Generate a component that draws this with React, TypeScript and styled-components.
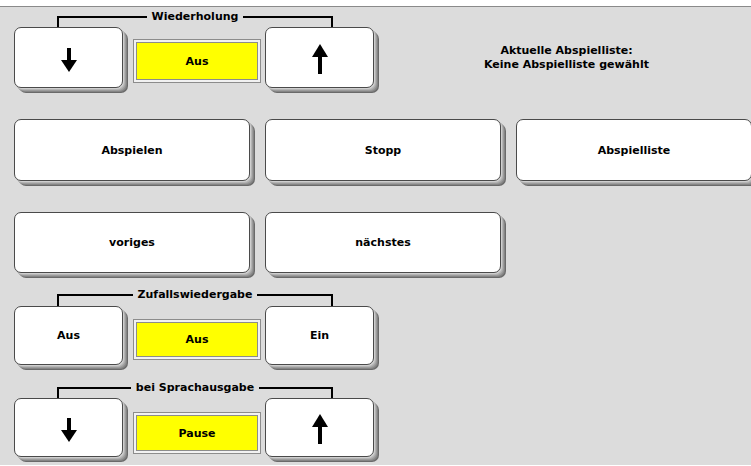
import React from 'react';
import styled, {createGlobalStyle} from 'styled-components';

const GlobalStyle = createGlobalStyle`
    html, body {
        margin: 0;
        padding: 0;
        background: #ffffff;
    }
    body {
        font-family: "DejaVu Sans", "Liberation Sans", sans-serif;
        font-size: 11px;
        font-weight: bold;
        color: #000;
    }
`;

const Screen = styled.div`
    margin-top: 6px;
    width: 751px;
    height: 459px;
    box-sizing: border-box;
    border-top: 1px solid #8a8a8a;
    background: #dcdcdc;
    padding-left: 14px;
    overflow: hidden;
    display: flex;
    flex-direction: column;
`;

const TopRow = styled.div`
    display: flex;
    padding-top: 9px;
`;

const Group = styled.div<{$top?: number}>`
    width: 360px;
    flex-shrink: 0;
    display: flex;
    flex-direction: column;
    margin-top: ${(p) => p.$top ?? 0}px;
`;

const Bracket = styled.div<{$h: number}>`
    display: flex;
    margin: 0 41px 0 43px;
    height: ${(p) => p.$h}px;
`;

const BracketSide = styled.div<{$side: 'left' | 'right'}>`
    flex: 1;
    border-top: 2px solid #000;
    ${(p) => p.$side === 'left' ? 'border-left: 2px solid #000;' : 'border-right: 2px solid #000;'}
`;

const BracketLabel = styled.span`
    padding: 0 5px;
    margin-top: -6px;
    line-height: 13px;
    height: 13px;
    white-space: nowrap;
`;

const SmallRow = styled.div<{$h: number}>`
    display: flex;
    align-items: flex-start;
    height: ${(p) => p.$h}px;
`;

const Key = styled.div<{$w: number; $h?: number}>`
    box-sizing: border-box;
    flex-shrink: 0;
    width: ${(p) => p.$w}px;
    height: ${(p) => (p.$h ? p.$h + 'px' : '100%')};
    background: #ffffff;
    border: 1px solid #4a4a4a;
    border-radius: 7px;
    box-shadow:
        1px 1px 0 #cfcfcf,
        2px 2px 0 #b4b4b4,
        3px 3px 0 #9c9c9c,
        4px 4px 0 #858585,
        5px 5px 0 #6a6a6a;
    display: flex;
    align-items: center;
    justify-content: center;
    white-space: nowrap;
`;

const DisplayFrame = styled.div<{$top: number; $h: number}>`
    box-sizing: border-box;
    flex-shrink: 0;
    width: 128px;
    margin: ${(p) => p.$top}px 4px 0 10px;
    height: ${(p) => p.$h}px;
    border: 1px solid #8c8c8c;
    background: #f2f2f2;
    padding: 2px;
    display: flex;
`;

const DisplayFace = styled.div`
    flex: 1;
    box-sizing: border-box;
    border: 1px solid #8c8c8c;
    background: #ffff00;
    display: flex;
    align-items: center;
    justify-content: center;
`;

const Info = styled.div`
    flex: 1;
    height: 61px;
    margin-top: 11px;
    padding-left: 8px;
    display: flex;
    flex-direction: column;
    align-items: center;
    justify-content: center;
    text-align: center;
    line-height: 14px;
`;

const BigRow = styled.div<{$top: number}>`
    display: flex;
    gap: 15px;
    margin-top: ${(p) => p.$top}px;
    height: 62px;
    flex-shrink: 0;
`;

const ArrowSvg = styled.svg<{$shift: number}>`
    display: block;
    margin-top: ${(p) => p.$shift}px;
`;

const ArrowDown = () => (
    <ArrowSvg $shift={4} width="16" height="24" viewBox="0 0 16 24">
        <rect x="6" y="0" width="4" height="14" fill="#000" />
        <polygon points="0,12 16,12 8,24" fill="#000" />
    </ArrowSvg>
);

const ArrowUp = () => (
    <ArrowSvg $shift={2} width="16" height="30" viewBox="0 0 16 30">
        <polygon points="8,0 16,13 0,13" fill="#000" />
        <rect x="6" y="11" width="4" height="19" fill="#000" />
    </ArrowSvg>
);

interface TripleProps {
    label: string;
    left: React.ReactNode;
    right: React.ReactNode;
    value: string;
    bracketH: number;
    rowH: number;
    dispTop: number;
    dispH: number;
    top?: number;
}

const Triple = ({label, left, right, value, bracketH, rowH, dispTop, dispH, top}: TripleProps) => (
    <Group $top={top}>
        <Bracket $h={bracketH}>
            <BracketSide $side="left" />
            <BracketLabel>{label}</BracketLabel>
            <BracketSide $side="right" />
        </Bracket>
        <SmallRow $h={rowH}>
            <Key $w={109}>{left}</Key>
            <DisplayFrame $top={dispTop} $h={dispH}>
                <DisplayFace>{value}</DisplayFace>
            </DisplayFrame>
            <Key $w={109}>{right}</Key>
        </SmallRow>
    </Group>
);

export default function App() {
    return (
        <>
            <GlobalStyle />
            <Screen>
                <TopRow>
                    <Triple label="Wiederholung" left={<ArrowDown />} right={<ArrowUp />} value="Aus"
                        bracketH={11} rowH={61} dispTop={12} dispH={44} />
                    <Info>
                        <span>Aktuelle Abspielliste:</span>
                        <span>Keine Abspielliste gewählt</span>
                    </Info>
                </TopRow>
                <BigRow $top={31}>
                    <Key $w={236}>Abspielen</Key>
                    <Key $w={236}>Stopp</Key>
                    <Key $w={236}>Abspielliste</Key>
                </BigRow>
                <BigRow $top={31}>
                    <Key $w={236} $h={61}>voriges</Key>
                    <Key $w={236} $h={61}>nächstes</Key>
                </BigRow>
                <Triple label="Zufallswiedergabe" left="Aus" right="Ein" value="Aus" top={20}
                    bracketH={12} rowH={59} dispTop={13} dispH={41} />
                <Triple label="bei Sprachausgabe" left={<ArrowDown />} right={<ArrowUp />} value="Pause" top={22}
                    bracketH={11} rowH={59} dispTop={14} dispH={42} />
            </Screen>
        </>
    );
}
